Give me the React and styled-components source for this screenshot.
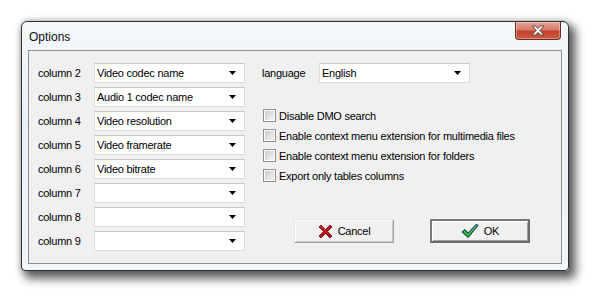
import React from 'react';
import styled, { createGlobalStyle } from 'styled-components';

const GlobalStyle = createGlobalStyle`
  html, body {
    margin: 0;
    background: #ffffff;
  }
  body {
    font-family: "Liberation Sans", Arial, sans-serif;
    font-size: 11px;
    letter-spacing: -0.25px;
    color: #000;
  }
`;

const Page = styled.div`
  padding: 21px 0 0 21px;
  width: 592px;
  height: 297px;
  box-sizing: border-box;
`;

const Window = styled.div`
  width: 548px;
  height: 250px;
  box-sizing: border-box;
  border: 1px solid #2f2f2f;
  border-radius: 6px 6px 4px 4px;
  background: linear-gradient(180deg, #f4f8fb 0%, #eaf1f7 40%, #f1f6fa 100%);
  box-shadow: 5px 6px 10px 2px rgba(0, 0, 0, 0.6), 0 0 6px rgba(0, 0, 0, 0.25);
  display: flex;
  flex-direction: column;
  padding: 0 6px 6px 6px;
`;

const TitleBar = styled.div`
  height: 28px;
  display: flex;
  align-items: flex-start;
  justify-content: space-between;
`;

const Title = styled.span`
  font-family: "Liberation Sans", Arial, sans-serif;
  font-size: 12px;
  letter-spacing: 0;
  color: #111;
  margin: 8px 0 0 1px;
`;

const CloseButton = styled.div`
  width: 46px;
  height: 18px;
  margin-right: 1px;
  box-sizing: border-box;
  border: 1px solid #6b2a22;
  border-top: none;
  border-radius: 0 0 4px 4px;
  background: linear-gradient(180deg, #e4a597 0%, #d77a68 45%, #c0432c 55%, #cf5a3e 100%);
  box-shadow: inset 0 0 0 1px rgba(255, 255, 255, 0.35);
  display: flex;
  align-items: center;
  justify-content: center;
`;

const Client = styled.div`
  flex: 1;
  border: 1px solid #8f8f8f;
  background: #f0f0f0;
  display: flex;
  padding: 12px 0 0 9px;
`;

const ColumnGrid = styled.div`
  display: grid;
  grid-template-columns: 56px 151px;
  grid-auto-rows: 20px;
  row-gap: 4px;
  align-items: center;
  align-content: start;
`;

const Label = styled.span`
  white-space: nowrap;
`;

const Combo = styled.div`
  width: ${(p) => p.$width}px;
  height: 20px;
  box-sizing: border-box;
  background: #fff;
  border: 1px solid #dcdcdc;
  border-top-color: #c8c8c8;
  display: flex;
  align-items: center;
  justify-content: space-between;
  padding: 0 8px 0 2px;
`;

const Arrow = () => (
  <svg width="7" height="4" viewBox="0 0 7 4">
    <path d="M0 0H7L3.5 4Z" fill="#000" />
  </svg>
);

const RightPane = styled.div`
  margin-left: 17px;
  display: flex;
  flex-direction: column;
`;

const LanguageRow = styled.div`
  display: flex;
  align-items: center;
  height: 20px;
`;

const LanguageLabel = styled.span`
  width: 57px;
`;

const Checks = styled.div`
  margin-top: 26px;
  display: flex;
  flex-direction: column;
  gap: 7px;
`;

const CheckRow = styled.label`
  display: flex;
  align-items: center;
  height: 13px;
  gap: 3px;
  white-space: nowrap;
  margin-left: 1px;
`;

const Box = styled.span`
  width: 13px;
  height: 13px;
  box-sizing: border-box;
  border: 1px solid #8e8f8f;
  background: #fff;
  padding: 1px;
  display: block;

  &::after {
    content: '';
    display: block;
    width: 100%;
    height: 100%;
    background: linear-gradient(135deg, #cbcbcb 0%, #e3e3e3 60%, #f4f4f4 100%);
  }
`;

const Buttons = styled.div`
  margin-top: 37px;
  margin-left: 32px;
  display: flex;
  gap: 36px;
`;

const Button = styled.div`
  width: 100px;
  height: 24px;
  box-sizing: border-box;
  background: #f0f0f0;
  border: ${(p) => (p.$default ? '2px solid #6a6a6a' : '1px solid #a0a0a0')};
  border-top-color: ${(p) => (p.$default ? '#7a7a7a' : '#e6e6e6')};
  border-left-color: ${(p) => (p.$default ? '#7a7a7a' : '#e6e6e6')};
  box-shadow: ${(p) =>
    p.$default ? 'inset 1px 1px 0 #fff, inset -1px -1px 0 #a0a0a0' : 'inset 1px 1px 0 #fff, inset -1px -1px 0 #c8c8c8'};
  display: flex;
  align-items: center;
  justify-content: center;
  gap: 5px;
  font-size: 11px;
`;

const CrossIcon = () => (
  <svg width="15" height="15" viewBox="0 0 15 15">
    <path
      d="M1 3L3 1L7.5 5.5L12 1L14 3L9.5 7.5L14 12L12 14L7.5 9.5L3 14L1 12L5.5 7.5Z"
      fill="#b3141a"
      stroke="#6e0a0c"
      strokeWidth="0.8"
      strokeLinejoin="round"
    />
    <path d="M2.2 3L3 2.2L7.5 6.7" stroke="#e35055" strokeWidth="0.8" fill="none" />
  </svg>
);

const CheckIcon = () => (
  <svg width="18" height="16" viewBox="0 0 18 16">
    <path
      d="M1 9L4 6.5L7 10L15.5 1L17 2.5L7.2 14.5Z"
      fill="#1da01d"
      stroke="#102d7a"
      strokeWidth="1"
      strokeLinejoin="round"
    />
    <path d="M3 8.3L6.8 12L15.6 2.5" stroke="#7ce07c" strokeWidth="0.8" fill="none" />
  </svg>
);

const columns = [
  { n: 2, value: 'Video codec name' },
  { n: 3, value: 'Audio 1 codec name' },
  { n: 4, value: 'Video resolution' },
  { n: 5, value: 'Video framerate' },
  { n: 6, value: 'Video bitrate' },
  { n: 7, value: '' },
  { n: 8, value: '' },
  { n: 9, value: '' },
];

const options = [
  'Disable DMO search',
  'Enable context menu extension for multimedia files',
  'Enable context menu extension for folders',
  'Export only tables columns',
];

export default function App() {
  return (
    <Page>
      <GlobalStyle />
      <Window>
        <TitleBar>
          <Title>Options</Title>
          <CloseButton>
            <svg width="16" height="11" viewBox="0 0 16 11">
              <path
                d="M2 1H5.5L8 3.6L10.5 1H14L9.8 5.5L14 10H10.5L8 7.4L5.5 10H2L6.2 5.5Z"
                fill="#fff"
                stroke="#5a4a48"
                strokeWidth="1"
                strokeLinejoin="round"
              />
            </svg>
          </CloseButton>
        </TitleBar>
        <Client>
          <ColumnGrid>
            {columns.map((c) => (
              <React.Fragment key={c.n}>
                <Label>column {c.n}</Label>
                <Combo $width={151}>
                  <span>{c.value}</span>
                  <Arrow />
                </Combo>
              </React.Fragment>
            ))}
          </ColumnGrid>
          <RightPane>
            <LanguageRow>
              <LanguageLabel>language</LanguageLabel>
              <Combo $width={151}>
                <span>English</span>
                <Arrow />
              </Combo>
            </LanguageRow>
            <Checks>
              {options.map((o) => (
                <CheckRow key={o}>
                  <Box />
                  <span>{o}</span>
                </CheckRow>
              ))}
            </Checks>
            <Buttons>
              <Button>
                <CrossIcon />
                <span>Cancel</span>
              </Button>
              <Button $default>
                <CheckIcon />
                <span>OK</span>
              </Button>
            </Buttons>
          </RightPane>
        </Client>
      </Window>
    </Page>
  );
}
